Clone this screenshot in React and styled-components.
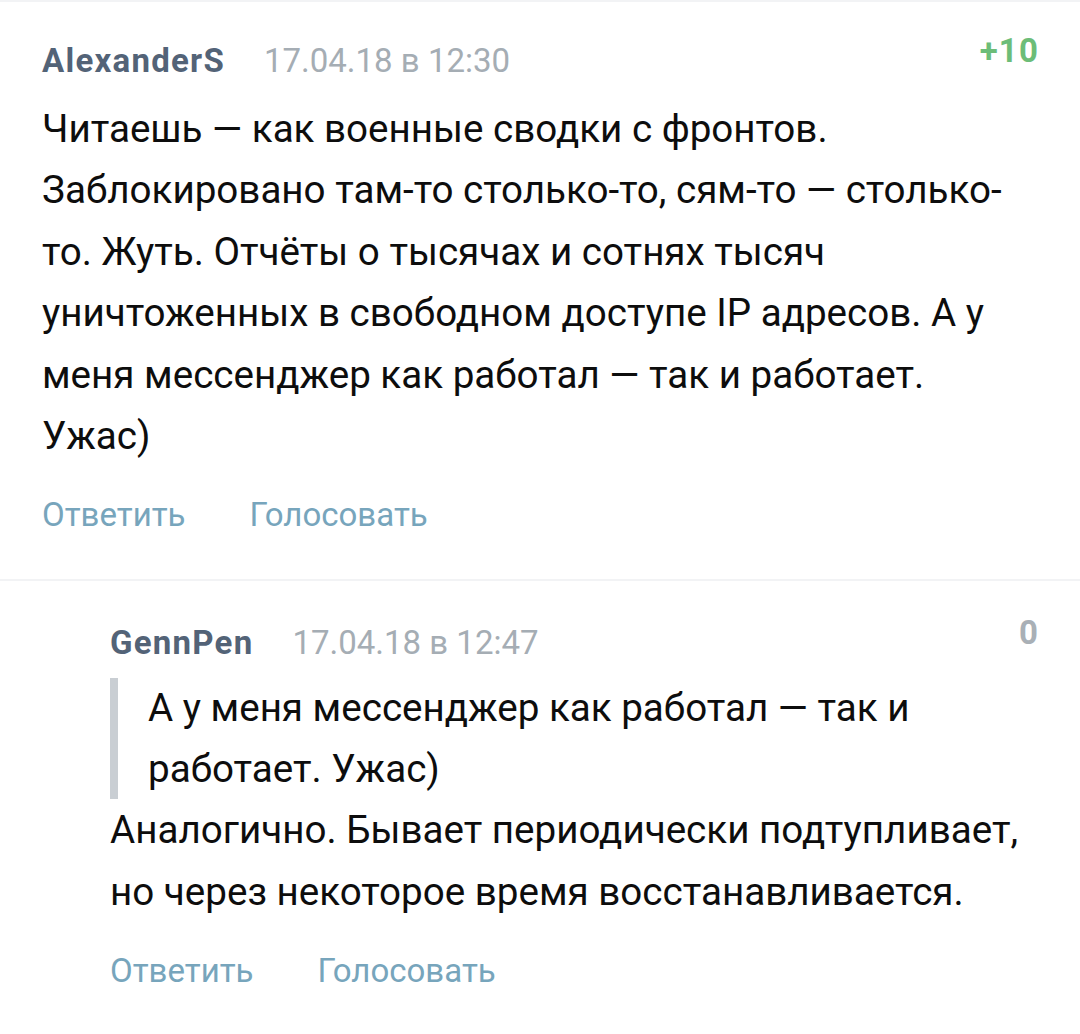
import React from "react";
import styled, { createGlobalStyle } from "styled-components";

const Global = createGlobalStyle`
  html, body { margin: 0; padding: 0; background: #fff; }
  body { font-family: Roboto, "Noto Sans", sans-serif; -webkit-font-smoothing: antialiased; }
`;

const List = styled.div`
  width: 1080px;
`;

const Comment = styled.div`
  border-top: 2px solid #f2f3f5;
  padding: ${(p) => p.$top}px 42px 0 ${(p) => p.$indent}px;
`;

const Header = styled.div`
  display: flex;
  align-items: baseline;
  height: 44px;
  line-height: 44px;
`;

const Author = styled.span`
  font-weight: 700;
  font-size: 33px;
  letter-spacing: 1.25px;
  color: #536377;
`;

const Date = styled.span`
  margin-left: 39px;
  font-size: 33px;
  color: #a5adb4;
`;

const Score = styled.span`
  margin-left: auto;
  font-weight: 700;
  font-size: 33px;
  letter-spacing: 1.25px;
  margin-right: -1.25px;
  color: ${(p) => p.$color};
  transform: translateY(-10px);
`;

const Body = styled.div`
  font-size: 38.6px;
  line-height: 61.4px;
  color: #0d0d0d;
  margin-top: ${(p) => p.$gap || 0}px;
`;

const Quote = styled.div`
  border-left: 8px solid #c9ced3;
  padding-left: 30px;
  margin-top: 13px;
  font-size: 38.6px;
  line-height: 60.5px;
  color: #0d0d0d;
`;

const Actions = styled.div`
  display: flex;
  gap: 64px;
  padding-top: 29px;
  padding-bottom: ${(p) => p.$bottom}px;
  line-height: 40px;
`;

const Action = styled.span`
  font-size: 33px;
  color: #77a5bc;
`;

export default function App() {
  return (
    <>
      <Global />
      <List>
        <Comment $indent={42} $top={37}>
          <Header>
            <Author>AlexanderS</Author>
            <Date>17.04.18 в 12:30</Date>
            <Score $color="#6cbd78">+10</Score>
          </Header>
          <Body $gap={15}>
            Читаешь — как военные сводки с фронтов. Заблокировано там-то столько-то, сям-то — столько-то. Жуть. Отчёты о тысячах и сотнях тысяч уничтоженных в свободном доступе IP адресов. А у меня мессенджер как работал — так и работает. Ужас)
          </Body>
          <Actions $bottom={44}>
            <Action>Ответить</Action>
            <Action>Голосовать</Action>
          </Actions>
        </Comment>
        <Comment $indent={110} $top={40}>
          <Header>
            <Author>GennPen</Author>
            <Date>17.04.18 в 12:47</Date>
            <Score $color="#a9b0b6">0</Score>
          </Header>
          <Quote>А у меня мессенджер как работал — так и работает. Ужас)</Quote>
          <Body>Аналогично. Бывает периодически подтупливает, но через некоторое время восстанавливается.</Body>
          <Actions $bottom={40}>
            <Action>Ответить</Action>
            <Action>Голосовать</Action>
          </Actions>
        </Comment>
      </List>
    </>
  );
}
